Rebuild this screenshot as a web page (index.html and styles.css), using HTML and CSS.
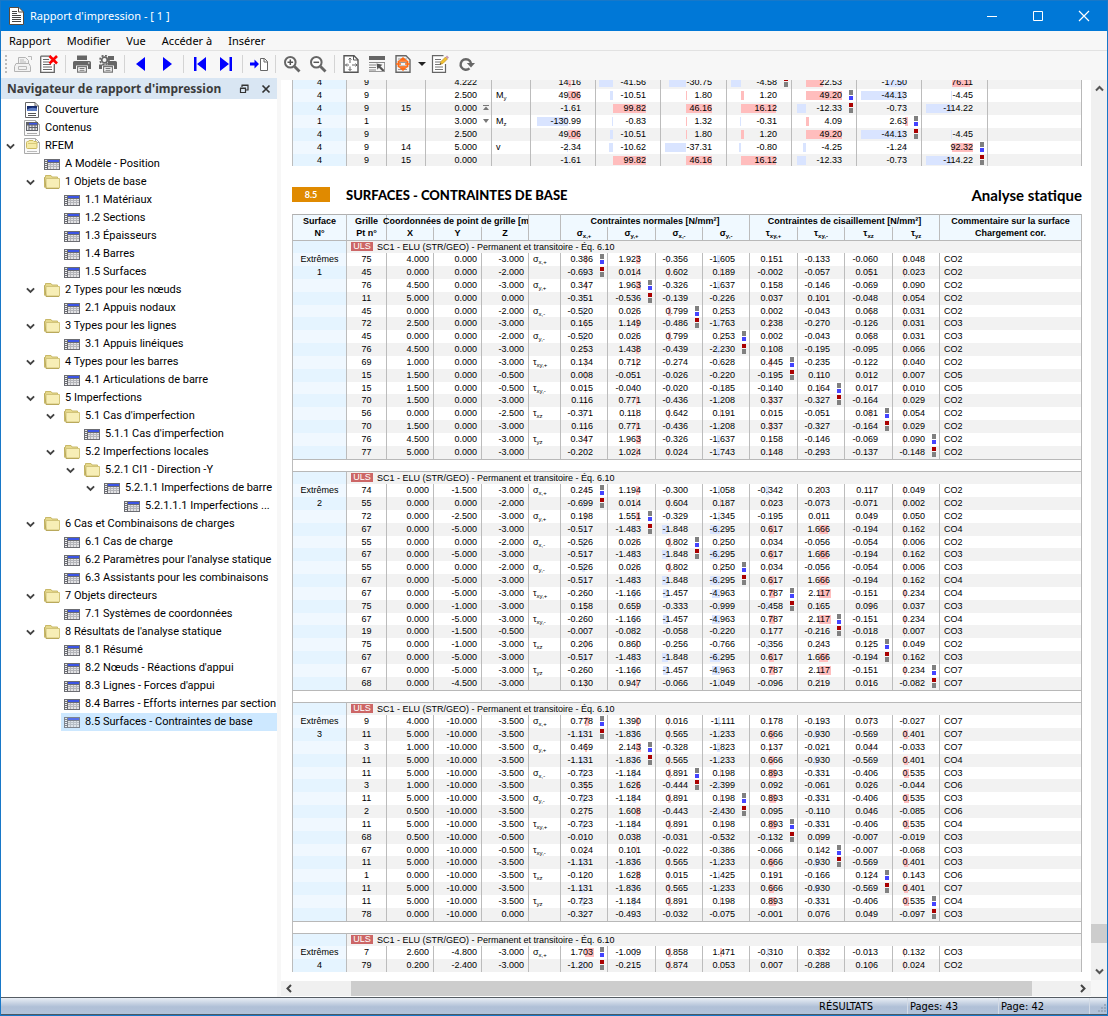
FILE: index.html
```html
<!DOCTYPE html>
<html lang="fr">
<head>
<meta charset="utf-8">
<meta name="viewport" content="width=device-width, initial-scale=1">
<title>Rapport d'impression</title>
<link rel="stylesheet" href="styles.css">
</head>
<body>
<svg class="sprite" aria-hidden="true">
  <symbol id="table" viewBox="0 0 16 11">
    <rect width="16" height="11" fill="#6b6c72"/>
    <path d="M4 1h11v2H4z" fill="#3c55e6"/>
    <path d="M1 1h2v1H1z" fill="#e8e8e8"/>
    <path d="M1 3h2v1H1zM1 5h2v1H1zM1 7h2v1H1zM1 9h2v1H1z" fill="#f4f4f4"/>
    <path d="M4 4h11v6H4z" fill="#e2e2e4"/>
    <path d="M4 5.500h11M4 7.500h11M6.500 4v6M9.500 4v6M12.500 4v6" stroke="#b4b5ba" fill="none"/>
  </symbol>
  <symbol id="folder" viewBox="0 0 16 14">
    <path d="M.5 12.500V2.500h1V.5h5.500l1 1.500h5.500v2" fill="#e6d98c" stroke="#c9b968"/>
    <path d="M15.500 3.500v9.500H2V3.500z" fill="#f7eeb6" stroke="#d2c47a"/>
    <path d="M.5 2.500L2 13.500h13" fill="none" stroke="#b9a95c"/>
  </symbol>
  <symbol id="cover" viewBox="0 0 14 16">
    <path d="M.5.5h9.500l3.500 3.500v11.500H.5z" fill="#fff" stroke="#666"/>
    <path d="M10 .5V4h3.500" fill="none" stroke="#666"/>
    <path d="M2 4h10v5H2z" fill="#142a6e"/>
    <path d="M2 7.500q4-3 10-1V9H2z" fill="#5b7bc4"/>
    <path d="M3 11.500h8M3 13.500h8" stroke="#555"/>
  </symbol>
  <symbol id="contents" viewBox="0 0 16 16">
    <path d="M.5.500h11l4 4v11H.5z" fill="#fafafa" stroke="#aaa"/>
    <path d="M11.500.500v4h4" fill="none" stroke="#aaa"/>
    <path d="M2 2h12v9H2z" fill="#5f6168"/>
    <path d="M5 3h8v1.500H5z" fill="#3c55e6"/>
    <path d="M3 5.500h1.500V10H3zM5.500 5.500h2V7h-2zM8.500 5.500h2V7h-2zM11.500 5.500H13V7h-1.500zM5.500 8h2v2h-2zM8.500 8h2v2h-2zM11.500 8H13v2h-1.500z" fill="#e4e4e6"/>
    <path d="M3 13.500h10" stroke="#aaa"/>
  </symbol>
  <symbol id="model" viewBox="0 0 16 16">
    <path d="M.5.500h11l4 4v11H.5z" fill="#fafafa" stroke="#aaa"/>
    <path d="M11.500.500v4h4" fill="none" stroke="#aaa"/>
    <path d="M2.500 9.500V4.500q0-1 1-1h1l.5-1h4l1 1h2q1 0 1 1v5q0 1-1 1h-8.500q-1 0-1-1z" fill="#f5eaa6" stroke="#cdbb62"/>
    <path d="M4 5.500h9" stroke="#d8c878"/>
    <path d="M3 13.500h10" stroke="#bbb"/>
  </symbol>
  <symbol id="chev" viewBox="0 0 9 7"><path d="M.9 1.300L4.500 4.900l3.600-3.600" fill="none" stroke="#444" stroke-width="1.900"/></symbol>

  <symbol id="report" viewBox="0 0 16 18">
    <path d="M1.500.500h9.500l4.500 4.500v12.500h-14z" fill="#fff" stroke="#5a4a3c"/>
    <path d="M10.500.500V5h5" fill="none" stroke="#5a4a3c"/>
    <path d="M4 4.500h5M4 6.500h5M4 8.500h9M4 10.500h9M4 12.500h9M4 14.500h9" stroke="#444"/>
  </symbol>
  <symbol id="sourceprint" viewBox="0 0 18 18">
    <path d="M4.500 8V2.500h7l3 3V8M2 8.500h13l1.500 3v5H.5v-5z" fill="#f2f2f2" stroke="#b4b4b4"/>
    <path d="M6 5h4M6 7h6M4.500 14.500h8v-3h-8zM14 1.500h3.500V5" fill="none" stroke="#bababa"/>
  </symbol>
  <symbol id="docdelete" viewBox="0 0 18 18">
    <path d="M.7 1.200h10M14.300 9v8.300H.7V1.200" fill="#fff" stroke="#666" stroke-width="1.300"/>
    <path d="M3 4.500h6M3 7h6M3 9.500h8M3 12h9M3 14.500h9" stroke="#666" stroke-width="1.200"/>
    <path d="M9.500 1l7.500 7.500M17 1L9.500 8.500" stroke="#f00" stroke-width="2.600"/>
  </symbol>
  <symbol id="printer" viewBox="0 0 18 18">
    <path d="M4 .5h10V5H4z" fill="#666"/>
    <path d="M1.500 6h15q1.500 0 1.500 1.500V14h-3v-3.500H3V14H0V7.500Q0 6 1.500 6z" fill="#666"/>
    <path d="M15 7.500h1.500v1H15z" fill="#fff"/>
    <path d="M4.600 11.600h8.800v5.600H4.600z" fill="#fff" stroke="#777" stroke-width="1.200"/>
    <path d="M6.500 13.500h5M6.500 15.300h5" stroke="#777"/>
  </symbol>
  <symbol id="printergear" viewBox="0 0 18 18">
    <path d="M9 1h6v4H9zM9 6h7.500Q18 6 18 7.500V14h-3v-3.500H3V14H0V9.500h9z" fill="#666"/>
    <path d="M4.600 11.600h8.800v5.600H4.600z" fill="#fff" stroke="#777" stroke-width="1.200"/>
    <path d="M6.500 13.500h5M6.500 15.300h5" stroke="#777"/>
    <circle cx="5.500" cy="5" r="4.500" fill="none" stroke="#666" stroke-width="1.600" stroke-dasharray="2 1.530"/>
    <circle cx="5.500" cy="5" r="2.800" fill="#f7f7f7" stroke="#666" stroke-width="1.700"/>
  </symbol>
  <symbol id="prev" viewBox="0 0 18 18"><path d="M13 2v14L4 9z" fill="#00f"/></symbol>
  <symbol id="next" viewBox="0 0 18 18"><path d="M5 2v14l9-7z" fill="#00f"/></symbol>
  <symbol id="first" viewBox="0 0 18 18"><path d="M3 2h2.500v14H3zM15 2v14L6 9z" fill="#00f"/></symbol>
  <symbol id="last" viewBox="0 0 18 18"><path d="M12.500 2H15v14h-2.500zM3 2v14l9-7z" fill="#00f"/></symbol>
  <symbol id="goto" viewBox="0 0 18 18">
    <path d="M0 7.500h4.500v-3L9 9l-4.500 4.500v-3H0z" fill="#00f"/>
    <path d="M10.500 3.500h4l3 3v9h-7zM14 3.500V7h3.500" fill="#fff" stroke="#666"/>
  </symbol>
  <symbol id="zoomin" viewBox="0 0 18 18">
    <circle cx="7.300" cy="7.300" r="5.300" fill="#fff" stroke="#666" stroke-width="2"/>
    <path d="M11.500 11.500l5 5" stroke="#666" stroke-width="2.800"/>
    <path d="M4.500 7.300h5.600M7.300 4.500v5.600" stroke="#555" stroke-width="1.500"/>
  </symbol>
  <symbol id="zoomout" viewBox="0 0 18 18">
    <circle cx="7.300" cy="7.300" r="5.300" fill="#fff" stroke="#666" stroke-width="2"/>
    <path d="M11.500 11.500l5 5" stroke="#666" stroke-width="2.800"/>
    <path d="M4.500 7.300h5.600" stroke="#555" stroke-width="1.500"/>
  </symbol>
  <symbol id="fitpage" viewBox="0 0 18 18">
    <path d="M2 .7h10l4 4v12.600H2z" fill="#fff" stroke="#555" stroke-width="1.400"/>
    <path d="M11.500.700V5H16" fill="none" stroke="#555"/>
    <path d="M8 3v5M8 15.500v-4M3.500 10H7M10 10h5M6.500 4.500L8 3l1.500 1.500M6.500 14L8 15.500 9.500 14M5 8.500L3.500 10 5 11.500M13.500 8.500L15 10l-1.500 1.500" fill="none" stroke="#666"/>
  </symbol>
  <symbol id="blocks" viewBox="0 0 18 18">
    <path d="M1 1h16v4H1z" fill="#666"/>
    <path d="M1 7h16v1H1zM1 9.500h7v1H1zM1 12h7v1H1zM1 14.500h7v1H1z" fill="#888"/>
    <path d="M8.500 8.500l6 1.200-2 1.500 4 4-1.600 1.600-4-4-1.500 2z" fill="#555"/>
    <path d="M1 16.500h16M16.500 8v8" stroke="#999" fill="none"/>
  </symbol>
  <symbol id="fitview" viewBox="0 0 18 18">
    <path d="M2 .7h10l4 4v12.600H2z" fill="#f4f4f4" stroke="#666" stroke-width="1.400"/>
    <path d="M4 4h9M4 7.500h9M4 11h9M4 14.500h9" stroke="#999"/>
    <path d="M9 2l4 3.500H5zM9 16l4-3.500H5z" fill="#ff6a13"/>
    <path d="M4.500 6h9M4.500 12h9M4.500 6v6M13.500 6v6M2 9h5M11 9h5" fill="none" stroke="#ff6a13" stroke-width="1.700"/>
  </symbol>
  <symbol id="docedit" viewBox="0 0 18 18">
    <path d="M14.500 9v8.300h-13V.700h11" fill="#fff" stroke="#666" stroke-width="1.200"/>
    <path d="M4 4.500h6M4 7h6M4 9.500h6M4 12h8M4 14.500h8" stroke="#777"/>
    <path d="M9 9.500l1-3 4.500-4.500 2 2L12 8.500z" fill="#f2c230" stroke="#b98a20" stroke-width=".6"/>
    <path d="M14.500 2L16 .500l2 2L16.500 4z" fill="#c99ab0"/>
    <path d="M9 9.500l.5-1.500 1 1z" fill="#333"/>
  </symbol>
  <symbol id="refresh" viewBox="0 0 18 18">
    <path d="M12.500 13.400A5.300 5.300 0 1 1 14 8" fill="none" stroke="#666" stroke-width="2.400"/>
    <path d="M9.800 8H18l-4 4.600z" fill="#666"/>
  </symbol>
</svg>

<div class="window">
  <header class="titlebar">
    <svg class="app-icon"><use href="#report"/></svg>
    <h1>Rapport d'impression - [ 1 ]</h1>
    <div class="window-buttons">
      <button type="button" aria-label="Réduire"><svg viewBox="0 0 12 12"><path d="M1 6.500h10" stroke="#fff"/></svg></button>
      <button type="button" aria-label="Agrandir"><svg viewBox="0 0 12 12"><path d="M1.500 1.500h9v9h-9z" fill="none" stroke="#fff"/></svg></button>
      <button type="button" aria-label="Fermer"><svg viewBox="0 0 12 12"><path d="M1 1l10 10M11 1L1 11" stroke="#fff" stroke-width="1.200"/></svg></button>
    </div>
  </header>

  <nav class="menubar">
    <a href="#">Rapport</a><a href="#">Modifier</a><a href="#">Vue</a><a href="#">Accéder à</a><a href="#">Insérer</a>
  </nav>

  <div class="toolbar" role="toolbar">
    <span class="handle"></span>
    <button type="button" aria-label="Imprimer le rapport source"><svg><use href="#sourceprint"/></svg></button>
    <button type="button" aria-label="Supprimer"><svg><use href="#docdelete"/></svg></button>
    <span class="sep"></span>
    <button type="button" aria-label="Imprimer"><svg><use href="#printer"/></svg></button>
    <button type="button" aria-label="Options d'impression"><svg><use href="#printergear"/></svg></button>
    <span class="sep"></span>
    <button type="button" aria-label="Page précédente"><svg><use href="#prev"/></svg></button>
    <button type="button" aria-label="Page suivante"><svg><use href="#next"/></svg></button>
    <span class="sep"></span>
    <button type="button" aria-label="Première page"><svg><use href="#first"/></svg></button>
    <button type="button" aria-label="Dernière page"><svg><use href="#last"/></svg></button>
    <span class="sep"></span>
    <button type="button" aria-label="Aller à la page"><svg><use href="#goto"/></svg></button>
    <span class="sep"></span>
    <button type="button" aria-label="Zoom avant"><svg><use href="#zoomin"/></svg></button>
    <button type="button" aria-label="Zoom arrière"><svg><use href="#zoomout"/></svg></button>
    <span class="sep"></span>
    <button type="button" aria-label="Page entière"><svg><use href="#fitpage"/></svg></button>
    <button type="button" aria-label="Sélection"><svg><use href="#blocks"/></svg></button>
    <button type="button" aria-label="Ajuster la vue"><svg><use href="#fitview"/></svg></button>
    <button type="button" class="drop" aria-label="Plus d'options"><svg viewBox="0 0 8 4"><path d="M0 0h8L4 4z" fill="#222"/></svg></button>
    <button type="button" aria-label="Éditer"><svg><use href="#docedit"/></svg></button>
    <button type="button" aria-label="Actualiser"><svg><use href="#refresh"/></svg></button>
  </div>

  <main class="workspace">
    <aside class="navigator">
      <div class="dock-title">
        <h2>Navigateur de rapport d'impression</h2>
        <button type="button" aria-label="Détacher"><svg viewBox="0 0 10 10"><path d="M3 3V1.500h6V6H7M2.500 1h7" fill="none" stroke="#333" stroke-width="1.200"/><path d="M1.500 4.500h5v4h-5zM1 4h6" fill="none" stroke="#333" stroke-width="1.200"/></svg></button>
        <button type="button" aria-label="Fermer"><svg viewBox="0 0 10 10"><path d="M1.500 1.500l7 7M8.500 1.500l-7 7" stroke="#333" stroke-width="1.700"/></svg></button>
      </div>
      <ul class="tree" id="tree"></ul>
    </aside>

    <section class="view">
      <div class="paper">
        <table class="sheet forces"><colgroup><col class="w54"><col class="w40"><col class="w39"><col class="w66"><col class="w39"><col class="w65"><col class="w65"><col class="w66"><col class="w65"><col class="w65"><col class="w65"><col class="w66"><col></colgroup><tbody id="forces"></tbody></table>

        <div class="section-title">
          <span class="number">8.5</span>
          <h2>SURFACES - CONTRAINTES DE BASE</h2>
          <p>Analyse statique</p>
        </div>

        <table class="sheet stresses" id="stresses">
          <colgroup><col class="w54"><col class="w40"><col class="w47"><col class="w48"><col class="w47"><col class="w32"><col class="w47"><col class="w48"><col class="w47"><col class="w47"><col class="w48"><col class="w47"><col class="w48"><col class="w47"><col></colgroup>
          <thead>
            <tr><th>Surface</th><th>Grille</th><th colspan="3"><span class="overrun">Coordonnées de point de grille [m]</span></th><th></th><th colspan="4">Contraintes normales [N/mm²]</th><th colspan="4">Contraintes de cisaillement [N/mm²]</th><th>Commentaire sur la surface</th></tr>
            <tr><th>N°</th><th>Pt n°</th><th>X</th><th>Y</th><th>Z</th><th></th><th>σ<sub>x,+</sub></th><th>σ<sub>y,+</sub></th><th>σ<sub>x,-</sub></th><th>σ<sub>y,-</sub></th><th>τ<sub>xy,+</sub></th><th>τ<sub>xy,-</sub></th><th>τ<sub>xz</sub></th><th>τ<sub>yz</sub></th><th>Chargement cor.</th></tr>
          </thead>
        </table>
      </div>
      <div class="vbar">
        <button type="button" aria-label="Défiler vers le haut"><svg viewBox="0 0 9 9"><path d="M1 6.500L4.500 3 8 6.500" fill="none" stroke="#555" stroke-width="2"/></svg></button>
        <div class="track"><span class="thumb"></span></div>
        <button type="button" aria-label="Défiler vers le bas"><svg viewBox="0 0 9 9"><path d="M1 2.500L4.500 6 8 2.500" fill="none" stroke="#555" stroke-width="2"/></svg></button>
      </div>
      <div class="hbar">
        <button type="button" aria-label="Défiler à gauche"><svg viewBox="0 0 9 9"><path d="M6 1L2.500 4.500 6 8" fill="none" stroke="#444" stroke-width="2"/></svg></button>
        <div class="track"><span class="thumb"></span></div>
        <button type="button" aria-label="Défiler à droite"><svg viewBox="0 0 9 9"><path d="M3 1l3.500 3.500L3 8" fill="none" stroke="#444" stroke-width="2"/></svg></button>
      </div>
    </section>
  </main>

  <footer class="statusbar">
    <span>RÉSULTATS</span><span>Pages: 43</span><span>Page: 42</span>
    <svg class="grip" viewBox="0 0 10 10"><path d="M8 0h2v2H8zM5 3h2v2H5zM8 3h2v2H8zM2 6h2v2H2zM5 6h2v2H5zM8 6h2v2H8z" fill="#9aa9bd"/></svg>
  </footer>
</div>
<script src="report.js"></script>
</body>
</html>
```

FILE: styles.css
```css
* { box-sizing: border-box; }

html, body { height: 100%; }

body {
  margin: 0;
  background: #f7f7f7;
  color: #000;
  font: 11px/18px Roboto, "Liberation Sans", sans-serif;
}

button {
  display: flex;
  align-items: center;
  justify-content: center;
  padding: 0;
  border: 0;
  background: none;
}

a { color: inherit; text-decoration: none; }
h1, h2, p, ul { margin: 0; padding: 0; }
ul { list-style: none; }
.sprite { display: none; }

.window {
  display: flex;
  flex-direction: column;
  height: 100vh;
  overflow: hidden;
  border: 1px solid #1878c8;
}

/* Title bar */
.titlebar {
  display: flex;
  flex: none;
  align-items: center;
  height: 30px;
  padding-left: 7px;
  background: #0078d7;
  color: #fff;
}
.app-icon { width: 16px; height: 18px; margin-right: 6px; }
.titlebar h1 { flex: 1; font: 11px/18px "Noto Sans", sans-serif; }
.window-buttons { display: flex; }
.window-buttons button { width: 46px; height: 30px; }
.window-buttons svg { width: 12px; height: 12px; }

/* Menu bar */
.menubar {
  display: flex;
  flex: none;
  gap: 16px;
  height: 20px;
  padding-left: 8px;
  border-bottom: 1px solid #e2e2e2;
  font: 11px/19px "Noto Sans", sans-serif;
}

/* Toolbar */
.toolbar {
  display: flex;
  flex: none;
  align-items: center;
  height: 27px;
  padding-bottom: 1px;
}
.toolbar button { width: 26px; height: 24px; }
.toolbar .drop { width: 11px; }
.toolbar svg { width: 18px; height: 18px; }
.toolbar .drop svg { width: 8px; height: 4px; }
.handle {
  width: 2px;
  height: 18px;
  margin: 0 3px 0 4px;
  background: repeating-linear-gradient(#bbb 0 2px, transparent 2px 4px);
}
.sep { width: 1px; height: 18px; margin: 0 3px; background: #d4d4d4; }

/* Workspace */
.workspace {
  display: flex;
  flex: 1;
  min-height: 0;
}
.navigator {
  flex: none;
  width: 276px;
  overflow: hidden;
  background: #fff;
}
.dock-title {
  display: flex;
  align-items: center;
  height: 21px;
  margin-bottom: 2px;
  padding-left: 6px;
  background: #d9e6f3;
}
.dock-title h2 {
  flex: 1;
  color: #3c3c3c;
  font: bold 12px/20px "Noto Sans", sans-serif;
}
.dock-title button { width: 22px; height: 20px; }
.dock-title svg { width: 10px; height: 10px; }

.tree ul { padding-left: 20px; }
.row { display: flex; height: 18px; }
.caret { width: 20px; height: 18px; padding-right: 2px; }
.caret svg { width: 9px; height: 7px; }
.row a {
  display: flex;
  flex: 1;
  align-items: center;
  gap: 5px;
  padding-left: 3px;
  white-space: nowrap;
}
.row a svg { width: 16px; }
.icon-table { height: 11px; }
.icon-folder { height: 14px; }
.icon-doc { height: 16px; }
.row .selected { background: #cde8ff; }
.selected svg { opacity: .8; }

/* Report view */
.view {
  display: grid;
  flex: 1;
  grid-template: 1fr 17px / 1fr 16px;
  min-width: 0;
  margin: 2px 0 0 4px;
}
.paper {
  min-height: 0;
  overflow: hidden;
  padding: 0 9px 0 11px;
  background: #fff;
}

.vbar, .hbar { display: flex; background: #f0f0f0; }
.vbar { flex-direction: column; }
.vbar button { height: 17px; }
.hbar button { width: 17px; }
.vbar svg, .hbar svg { width: 9px; height: 9px; }
.track { display: grid; flex: 1; }
.thumb { background: #cdcdcd; }
.vbar .track { grid-template-rows: 955fr 22fr 23fr; }
.vbar .thumb { grid-row: 2; }
.hbar .track { grid-template-columns: 68fr 878fr 54fr; }
.hbar .thumb { grid-column: 2; }
.hbar { border-top: 1px solid #fff; border-bottom: 1px solid #fff; }

/* Report tables */
.sheet {
  width: 100%;
  border-spacing: 0;
  border-right: 1px solid #b8b8b8;
  table-layout: fixed;
  font: 9px/11px "Liberation Sans", Arial, sans-serif;
}
.forces { margin-top: -4px; }
.w32 { width: 32px; }
.w39 { width: 39px; }
.w40 { width: 40px; }
.w47 { width: 47px; }
.w48 { width: 48px; }
.w54 { width: 54px; }
.w65 { width: 65px; }
.w66 { width: 66px; }

.sheet th, .sheet td {
  height: 13px;
  padding: 0;
  border-left: 1px solid #bcbcbc;
  text-align: center;
  white-space: nowrap;
}
.sheet tbody tr:nth-child(odd) { background: #f2f2f2; }
.sheet tbody tr:nth-child(even) { background: #fff; }
.sheet tbody tr:nth-child(odd) .key { background: #e5f4ff; }
.sheet tbody tr:nth-child(even) .key { background: #f0f8ff; }
.stresses tbody tr:nth-child(6n) td { height: 12px; }
.forces tr:last-child td { height: 12px; }
.sheet sub { font-size: 6px; line-height: 0; vertical-align: -2px; }

.sheet .num { padding-right: 4px; text-align: right; }
.sheet .force-x { position: relative; padding-right: 14px; text-align: right; }
.sheet .label, .sheet .comment { padding-left: 4px; text-align: left; }
.sheet .value {
  position: relative;
  padding-right: 14px;
  background: linear-gradient(var(--tint), var(--tint)) no-repeat var(--x) 2px / var(--w) 9px;
  text-align: right;
}
.pos { --tint: #ffbdbd; }
.neg { --tint: #d9e4ff; }

/* Extreme value markers */
.max::after, .min::after {
  position: absolute;
  top: 1px;
  right: 3px;
  width: 4px;
  height: 10px;
  content: "";
}
.max::after { background: linear-gradient(#808080 0 5px, transparent 5px 6px, #4444ff 6px); }
.min::after { background: linear-gradient(#aa0000 0 4px, transparent 4px 5px, #808080 5px); }

.station {
  position: absolute;
  top: 3px;
  right: 2px;
  width: 6px;
  height: 6px;
}

.stresses thead tr { background: #f0f9ff; }
.sheet thead th { font-weight: bold; }
.stresses thead tr:first-child th { border-top: 1px solid #b0b0b0; }
.stresses .group td, .stresses .gap td { border-top: 1px solid #b8b8b8; }
.sheet .group td { text-align: left; }
.sheet .group .text { padding-left: 4px; }
.overrun {
  display: flex;
  justify-content: center;
  clip-path: inset(0 0 0 -8px);
}
.uls {
  display: inline-block;
  width: 22px;
  height: 9px;
  margin-right: 4px;
  background: #cc6666;
  color: #fff;
  line-height: 9px;
  text-align: center;
  vertical-align: top;
}

.section-title {
  display: flex;
  align-items: center;
  height: 15px;
  margin: 21px 0 12px;
  font-family: Lato, sans-serif;
}
.number {
  width: 38px;
  background: #e08a00;
  color: #fff;
  font: bold 9px/15px Lato, sans-serif;
  text-align: center;
}
.section-title h2 {
  flex: 1;
  margin-left: 16px;
  font-size: 13px;
  font-weight: 900;
}
.section-title p { font-size: 15px; font-weight: bold; }

/* Status bar */
.statusbar {
  display: flex;
  flex: none;
  justify-content: flex-end;
  height: 18px;
  border-top: 1px solid #555c63;
  border-bottom: 1px solid #4b5a66;
  background: linear-gradient(#e9eef5, #b0c0d7 55%, #b3c3d9);
  font: 11px/18px "DejaVu Sans Condensed", "DejaVu Sans", sans-serif;
}
.statusbar span {
  width: 91px;
  padding-left: 2px;
  border-right: 1px solid #d3dbe6;
}
.grip { align-self: flex-end; width: 10px; height: 10px; margin: 0 1px 0 6px; }
```

FILE: report.js
```js
/* Navigator entries: depth, icon, label, expanded */
const tree = [
  [0, "cover", "Couverture"], [0, "contents", "Contenus"], [0, "model", "RFEM", 1],
  [1, "table", "A Modèle - Position"],
  [1, "folder", "1 Objets de base", 1],
  [2, "table", "1.1 Matériaux"], [2, "table", "1.2 Sections"], [2, "table", "1.3 Épaisseurs"],
  [2, "table", "1.4 Barres"], [2, "table", "1.5 Surfaces"],
  [1, "folder", "2 Types pour les nœuds", 1], [2, "table", "2.1 Appuis nodaux"],
  [1, "folder", "3 Types pour les lignes", 1], [2, "table", "3.1 Appuis linéiques"],
  [1, "folder", "4 Types pour les barres", 1], [2, "table", "4.1 Articulations de barre"],
  [1, "folder", "5 Imperfections", 1],
  [2, "folder", "5.1 Cas d'imperfection", 1], [3, "table", "5.1.1 Cas d'imperfection"],
  [2, "folder", "5.2 Imperfections locales", 1],
  [3, "folder", "5.2.1 CI1 - Direction -Y", 1],
  [4, "table", "5.2.1.1 Imperfections de barre", 1],
  [5, "table", "5.2.1.1.1 Imperfections ..."],
  [1, "folder", "6 Cas et Combinaisons de charges", 1],
  [2, "table", "6.1 Cas de charge"], [2, "table", "6.2 Paramètres pour l'analyse statique"],
  [2, "table", "6.3 Assistants pour les combinaisons"],
  [1, "folder", "7 Objets directeurs", 1], [2, "table", "7.1 Systèmes de coordonnées"],
  [1, "folder", "8 Résultats de l'analyse statique", 1],
  [2, "table", "8.1 Résumé"], [2, "table", "8.2 Nœuds - Réactions d'appui"],
  [2, "table", "8.3 Lignes - Forces d'appui"], [2, "table", "8.4 Barres - Efforts internes par section"],
  [2, "table", "8.5 Surfaces - Contraintes de base"]
];

const kind = { table: "icon-table", folder: "icon-folder" };
const lists = [document.getElementById("tree")];
tree.forEach(([depth, icon, label, open], i) => {
  const li = document.createElement("li");
  const caret = open
    ? '<button type="button" class="caret" aria-label="Réduire"><svg><use href="#chev"/></svg></button>'
    : '<span class="caret"></span>';
  const state = i === tree.length - 1 ? ' class="selected" aria-current="page"' : "";
  li.innerHTML = `<div class="row">${caret}<a href="#"${state}><svg class="${kind[icon] || "icon-doc"}"><use href="#${icon}"/></svg>${label}</a></div>`;
  lists[depth].append(li);
  if (open) {
    const ul = document.createElement("ul");
    li.append(ul);
    lists[depth + 1] = ul;
  }
});

/* A value cell; the bar starts at the column's zero and grows with the value */
function valueCell(text, [zero, scale], marker) {
  if (!text || text === "_") return "<td></td>";
  const v = parseFloat(text);
  const w = Math.max(1, Math.round(Math.abs(v) * scale));
  const x = v < 0 ? zero - w : zero;
  return `<td class="value ${v < 0 ? "neg" : "pos"} ${marker}" style="--x:${x}px;--w:${w}px">${text}</td>`;
}

/* Member forces; a trailing + or - on a value marks the extreme */
const forceBars = [[37, .24], [17, .33], [25, .56], [14, 2.2], [14, .74], [48, 1], [30, .23]];
const forces = `
4 9 _ 4.222 _ 14.16 -41.56 -30.75 -4.58- 22.53 -17.50 76.11
4 9 _ 2.500 M<sub>y</sub> 49.06 -10.51 1.80 1.20 49.20+ -44.13 -4.45
4 9 15 0.000^ _ -1.61 99.82 46.16 16.12 -12.33- -0.73 -114.22
1 1 _ 3.000v M<sub>z</sub> -130.99 -0.83 1.32 -0.31 4.09 2.63+ _
4 9 _ 2.500 _ 49.06 -10.51 1.80 1.20 49.20 -44.13- -4.45
4 9 14 5.000 v -2.34 -10.62 -37.31 -0.80 -4.25 -1.24 92.32+
4 9 15 0.000 _ -1.61 99.82 46.16 16.12 -12.33 -0.73 -114.22-`;
const station = {
  "^": '<svg class="station" viewBox="0 0 6 6"><path d="M0 0h6v1H0zM3 1.500L6 5H0z" fill="#777"/></svg>',
  "v": '<svg class="station" viewBox="0 0 6 6"><path d="M0 1h6L3 5z" fill="#777"/></svg>'
};
const blank = t => (t === "_" ? "" : t);
document.getElementById("forces").innerHTML = forces.trim().split("\n").map(line => {
  const c = line.split(" ");
  const flag = station[c[3].slice(-1)] || "";
  const x = flag ? c[3].slice(0, -1) : c[3];
  const values = c.slice(5).map((t, i) => {
    const m = t.endsWith("+") ? "max" : t.endsWith("-") ? "min" : "";
    return valueCell(m ? t.slice(0, -1) : t, forceBars[i], m);
  }).join("");
  return `<tr><td class="key">${c[0]}</td><td>${c[1]}</td><td>${blank(c[2])}</td><td class="force-x">${x}${flag}</td><td class="label">${blank(c[4])}</td>${values}<td></td></tr>`;
}).join("");

/* Surface stresses; rows come in max/min pairs, one pair for each component */
const stressBars = [[24, 5], [28, 2.3], [12, 3.3], [17, 1.6], [19, 7.5], [21, 5.5], [25, 3.5], [11, 9]];
const components = ["σ<sub>x,+</sub>", "σ<sub>y,+</sub>", "σ<sub>x,-</sub>", "σ<sub>y,-</sub>", "τ<sub>xy,+</sub>", "τ<sub>xy,-</sub>", "τ<sub>xz</sub>", "τ<sub>yz</sub>"];
const surfaces = [`
75 4.000 0.000 -3.000 0.386 1.923 -0.356 -1.605 0.151 -0.133 -0.060 0.048 CO2
45 0.000 0.000 -2.000 -0.693 0.014 0.602 0.189 -0.002 -0.057 0.051 0.023 CO2
76 4.500 0.000 -3.000 0.347 1.963 -0.326 -1.637 0.158 -0.146 -0.069 0.090 CO2
11 5.000 0.000 0.000 -0.351 -0.536 -0.139 -0.226 0.037 0.101 -0.048 0.054 CO2
45 0.000 0.000 -2.000 -0.520 0.026 0.799 0.253 0.002 -0.043 0.068 0.031 CO2
72 2.500 0.000 -3.000 0.165 1.149 -0.486 -1.763 0.238 -0.270 -0.126 0.031 CO3
45 0.000 0.000 -2.000 -0.520 0.026 0.799 0.253 0.002 -0.043 0.068 0.031 CO3
76 4.500 0.000 -3.000 0.253 1.438 -0.439 -2.230 0.108 -0.195 -0.095 0.066 CO2
69 1.000 0.000 -3.000 0.134 0.712 -0.274 -0.628 0.445 -0.235 -0.122 0.040 CO2
15 1.500 0.000 -0.500 0.008 -0.051 -0.026 -0.220 -0.195 0.110 0.012 0.007 CO5
15 1.500 0.000 -0.500 0.015 -0.040 -0.020 -0.185 -0.140 0.164 0.017 0.010 CO5
70 1.500 0.000 -3.000 0.116 0.771 -0.436 -1.208 0.337 -0.327 -0.164 0.029 CO2
56 0.000 0.000 -2.500 -0.371 0.118 0.642 0.191 0.015 -0.051 0.081 0.054 CO2
70 1.500 0.000 -3.000 0.116 0.771 -0.436 -1.208 0.337 -0.327 -0.164 0.029 CO2
76 4.500 0.000 -3.000 0.347 1.963 -0.326 -1.637 0.158 -0.146 -0.069 0.090 CO2
77 5.000 0.000 -3.000 -0.202 1.024 0.024 -1.743 0.148 -0.293 -0.137 -0.148 CO2`, `
74 0.000 -1.500 -3.000 0.245 1.194 -0.300 -1.058 -0.342 0.203 0.117 0.049 CO2
55 0.000 0.000 -2.000 -0.699 0.014 0.604 0.187 0.023 -0.073 -0.071 0.002 CO2
72 0.000 -2.500 -3.000 0.198 1.551 -0.329 -1.345 -0.195 0.011 0.049 0.050 CO2
67 0.000 -5.000 -3.000 -0.517 -1.483 -1.848 -6.295 0.617 1.666 -0.194 0.162 CO4
55 0.000 0.000 -2.000 -0.526 0.026 0.802 0.250 0.034 -0.056 -0.054 0.006 CO2
67 0.000 -5.000 -3.000 -0.517 -1.483 -1.848 -6.295 0.617 1.666 -0.194 0.162 CO3
55 0.000 0.000 -2.000 -0.526 0.026 0.802 0.250 0.034 -0.056 -0.054 0.006 CO3
67 0.000 -5.000 -3.000 -0.517 -1.483 -1.848 -6.295 0.617 1.666 -0.194 0.162 CO4
67 0.000 -5.000 -3.000 -0.260 -1.166 -1.457 -4.963 0.787 2.117 -0.151 0.234 CO4
75 0.000 -1.000 -3.000 0.158 0.659 -0.333 -0.999 -0.458 0.165 0.096 0.037 CO3
67 0.000 -5.000 -3.000 -0.260 -1.166 -1.457 -4.963 0.787 2.117 -0.151 0.234 CO4
19 0.000 -1.500 -0.500 -0.007 -0.082 -0.058 -0.220 0.177 -0.216 -0.018 0.007 CO3
75 0.000 -1.000 -3.000 0.206 0.860 -0.256 -0.766 -0.356 0.243 0.125 0.049 CO2
67 0.000 -5.000 -3.000 -0.517 -1.483 -1.848 -6.295 0.617 1.666 -0.194 0.162 CO3
67 0.000 -5.000 -3.000 -0.260 -1.166 -1.457 -4.963 0.787 2.117 -0.151 0.234 CO7
68 0.000 -4.500 -3.000 0.130 0.947 -0.066 -1.049 -0.096 0.219 0.016 -0.082 CO7`, `
9 4.000 -10.000 -3.500 0.778 1.390 0.016 -1.111 0.178 -0.193 0.073 -0.027 CO7
11 5.000 -10.000 -3.500 -1.131 -1.836 0.565 -1.233 0.666 -0.930 -0.569 0.401 CO7
3 1.000 -10.000 -3.500 0.469 2.143 -0.328 -1.823 0.137 -0.021 0.044 -0.033 CO7
11 5.000 -10.000 -3.500 -1.131 -1.836 0.565 -1.233 0.666 -0.930 -0.569 0.401 CO4
11 5.000 -10.000 -3.500 -0.723 -1.184 0.891 0.198 0.893 -0.331 -0.406 0.535 CO3
3 1.000 -10.000 -3.500 0.355 1.626 -0.444 -2.399 0.092 -0.061 0.026 -0.044 CO6
11 5.000 -10.000 -3.500 -0.723 -1.184 0.891 0.198 0.893 -0.331 -0.406 0.535 CO3
2 0.500 -10.000 -3.500 0.275 1.608 -0.443 -2.430 0.095 -0.110 0.046 -0.085 CO6
11 5.000 -10.000 -3.500 -0.723 -1.184 0.891 0.198 0.893 -0.331 -0.406 0.535 CO4
68 0.500 -10.000 -0.500 -0.010 0.038 -0.031 -0.532 -0.132 0.099 -0.007 -0.019 CO3
67 0.000 -10.000 -0.500 0.024 0.101 -0.022 -0.386 -0.066 0.142 -0.007 -0.068 CO3
11 5.000 -10.000 -3.500 -1.131 -1.836 0.565 -1.233 0.666 -0.930 -0.569 0.401 CO3
1 0.000 -10.000 -3.500 -0.120 1.628 0.015 -1.425 0.191 -0.166 0.124 0.143 CO6
11 5.000 -10.000 -3.500 -1.131 -1.836 0.565 -1.233 0.666 -0.930 -0.569 0.401 CO7
11 5.000 -10.000 -3.500 -0.723 -1.184 0.891 0.198 0.893 -0.331 -0.406 0.535 CO4
78 0.000 -10.000 0.000 -0.327 -0.493 -0.032 -0.075 -0.001 0.076 0.049 -0.097 CO3`, `
7 2.600 -4.800 -3.000 1.703 -1.009 0.858 1.471 -0.310 0.332 -0.013 0.132 CO3
79 0.200 -2.400 -3.000 -1.200 -0.215 0.874 0.053 0.007 -0.288 0.106 0.024 CO2`];

const stresses = document.getElementById("stresses");
surfaces.forEach((text, s) => {
  const body = document.createElement("tbody");
  const rows = text.trim().split("\n").map((line, r) => {
    const c = line.split(" ");
    const key = r === 0 ? "Extrêmes" : r === 1 ? s + 1 : "";
    const pair = r >> 1;
    const values = c.slice(4, 12).map((t, i) =>
      valueCell(t, stressBars[i], i === pair ? (r % 2 ? "min" : "max") : "")).join("");
    const xyz = c.slice(1, 4).map(t => `<td class="num">${t}</td>`).join("");
    return `<tr><td class="key">${key}</td><td>${c[0]}</td>${xyz}<td class="label">${r % 2 ? "" : components[pair]}</td>${values}<td class="comment">${c[12]}</td></tr>`;
  });
  rows.unshift('<tr class="group"><td class="key"></td><td class="text" colspan="14"><span class="uls">ULS</span>SC1 - ELU (STR/GEO) - Permanent et transitoire - Éq. 6.10</td></tr>');
  if (s < surfaces.length - 1) rows.push('<tr class="gap"><td colspan="15"></td></tr>');
  body.innerHTML = rows.join("");
  stresses.append(body);
});
```
